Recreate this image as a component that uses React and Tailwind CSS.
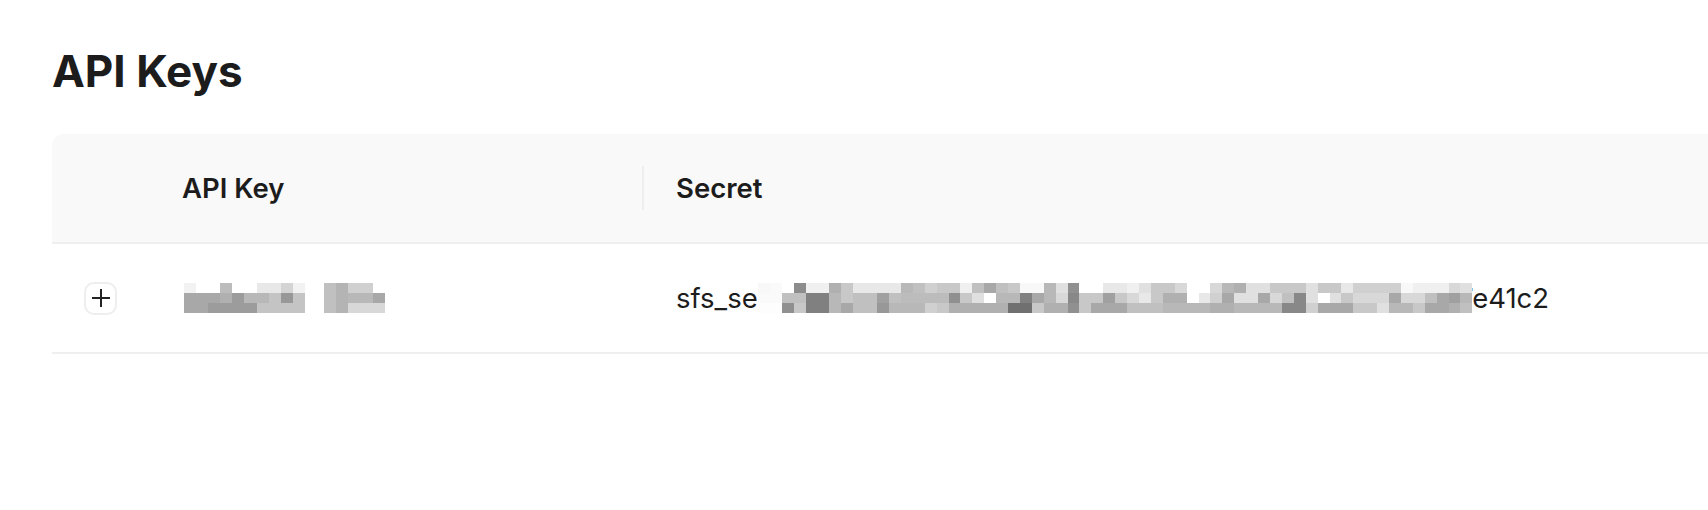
import React from "react";

// pixelated (redacted) blocks: each entry is one 12px column, top/middle/bottom shade
const keyBlur1 = [
  ["#f2f2f2", "#a8a8a8", "#a8a8a8"],
  ["#ffffff", "#a8a8a8", "#a8a8a8"],
  ["#ffffff", "#a8a8a8", "#9c9c9c"],
  ["#bcbcbc", "#b0b0b0", "#9c9c9c"],
  ["#ffffff", "#9c9c9c", "#9c9c9c"],
  ["#ffffff", "#b8b8b8", "#9c9c9c"],
  ["#e8e8e8", "#b8b8b8", "#c4c4c4"],
  ["#e8e8e8", "#c4c4c4", "#c4c4c4"],
  ["#d4d4d4", "#989898", "#c4c4c4"],
  ["#f2f2f2", "#c4c4c4", "#c4c4c4"],
];

const keyBlur2 = [
  ["#c0c0c0", "#c0c0c0", "#c0c0c0"],
  ["#b4b4b4", "#b4b4b4", "#b4b4b4"],
  ["#d0d0d0", "#b8b8b8", "#d8d8d8"],
  ["#d0d0d0", "#b8b8b8", "#d8d8d8"],
  ["#ffffff", "#a8a8a8", "#d8d8d8"],
];

const secretBlur = [
  ["#f8f8f8", "#fafafa", "#fdfdfd"],
  ["#fafafa", "#fafafa", "#fdfdfd"],
  ["#ffffff", "#c0c0c0", "#909090"],
  ["#8c8c8c", "#c0c0c0", "#c8c8c8"],
  ["#f0f0f0", "#808080", "#808080"],
  ["#f0f0f0", "#808080", "#808080"],
  ["#b0b0b0", "#b8b8b8", "#b8b8b8"],
  ["#c8c8c8", "#c8c8c8", "#a8a8a8"],
  ["#e8e8e8", "#c0c0c0", "#c0c0c0"],
  ["#e8e8e8", "#c0c0c0", "#c0c0c0"],
  ["#e8e8e8", "#a0a0a0", "#989898"],
  ["#e8e8e8", "#c0c0c0", "#b8b8b8"],
  ["#b8b8b8", "#bcbcbc", "#b8b8b8"],
  ["#c0c0c0", "#bcbcbc", "#b8b8b8"],
  ["#d0d0d0", "#bcbcbc", "#d0d0d0"],
  ["#c8c8c8", "#bcbcbc", "#c8c8c8"],
  ["#c8c8c8", "#909090", "#b0b0b0"],
  ["#f0f0f0", "#c8c8c8", "#b0b0b0"],
  ["#c0c0c0", "#e0e0e0", "#b0b0b0"],
  ["#a8a8a8", "#ffffff", "#b0b0b0"],
  ["#c0c0c0", "#b8b8b8", "#b0b0b0"],
  ["#c8c8c8", "#b8b8b8", "#707070"],
  ["#f8f8f8", "#808080", "#707070"],
  ["#f8f8f8", "#a8a8a8", "#c8c8c8"],
  ["#b8b8b8", "#b8b8b8", "#b0b0b0"],
  ["#e0e0e0", "#d8d8d8", "#b0b0b0"],
  ["#909090", "#888888", "#909090"],
  ["#ffffff", "#c8c8c8", "#c8c8c8"],
  ["#ffffff", "#c8c8c8", "#a8a8a8"],
  ["#e8e8e8", "#a0a0a0", "#a8a8a8"],
  ["#e8e8e8", "#c8c8c8", "#a8a8a8"],
  ["#f0f0f0", "#d8d8d8", "#c0c0c0"],
  ["#e0e0e0", "#e8e8e8", "#c0c0c0"],
  ["#c8c8c8", "#c8c8c8", "#c0c0c0"],
  ["#c8c8c8", "#b0b0b0", "#b8b8b8"],
  ["#d8d8d8", "#b0b0b0", "#b8b8b8"],
  ["#ffffff", "#ffffff", "#b8b8b8"],
  ["#ffffff", "#e8e8e8", "#b8b8b8"],
  ["#d8d8d8", "#d0d0d0", "#b0b0b0"],
  ["#b8b8b8", "#a8a8a8", "#b0b0b0"],
  ["#b0b0b0", "#e0e0e0", "#b8b8b8"],
  ["#e0e0e0", "#e0e0e0", "#b8b8b8"],
  ["#e0e0e0", "#a8a8a8", "#b8b8b8"],
  ["#c8c8c8", "#d8d8d8", "#b8b8b8"],
  ["#c8c8c8", "#c0c0c0", "#888888"],
  ["#c8c8c8", "#888888", "#888888"],
  ["#e0e0e0", "#e0e0e0", "#d0d0d0"],
  ["#c8c8c8", "#ffffff", "#a8a8a8"],
  ["#c8c8c8", "#e0e0e0", "#a8a8a8"],
  ["#e8e8e8", "#c8c8c8", "#a8a8a8"],
  ["#d0d0d0", "#d8d8d8", "#c8c8c8"],
  ["#d0d0d0", "#d8d8d8", "#c8c8c8"],
  ["#d0d0d0", "#d8d8d8", "#e0e0e0"],
  ["#d0d0d0", "#a8a8a8", "#b8b8b8"],
  ["#f8f8f8", "#d8d8d8", "#b8b8b8"],
  ["#f0f0f0", "#d8d8d8", "#c8c8c8"],
  ["#f0f0f0", "#c0c0c0", "#a8a8a8"],
  ["#f0f0f0", "#a8a8a8", "#a8a8a8"],
  ["#d8d8d8", "#a0a0a0", "#b0b0b0"],
  ["#e0e0e0", "#b8b8b8", "#c0c0c0"],
];

function Pixelated({ cols, className }) {
  return (
    <div className={"relative z-10 flex " + className}>
      {cols.map((col, i) => (
        <div key={i} className="flex flex-1 flex-col">
          {col.map((c, j) => (
            <div key={j} className="flex-1" style={{ backgroundColor: c }} />
          ))}
        </div>
      ))}
    </div>
  );
}

function PlusButton() {
  return (
    <button className="flex h-[33px] w-[33px] items-center justify-center rounded-[10px] border-2 border-[#eeeeee] bg-white">
      <svg width="20" height="20" viewBox="0 0 20 20" fill="none">
        <path d="M10 1v18M1 10h18" stroke="#222222" strokeWidth="2" />
      </svg>
    </button>
  );
}

export default function App() {
  return (
    <div className="h-[510px] w-full overflow-hidden bg-white font-['Inter','Liberation_Sans',sans-serif] text-[#1c1c1c]">
      <h1 className="pl-[52px] pt-[45px] text-[44px] leading-[52px] font-bold">
        API Keys
      </h1>

      <div className="ml-[52px] mt-[37px] w-[1700px]">
        {/* header */}
        <div className="grid h-[110px] grid-cols-[97px_493px_1fr] rounded-t-[12px] border-b-2 border-[#efefef] bg-[#f9f9f9] text-[27.5px] leading-[36px] font-semibold">
          <div />
          <div className="flex items-center pl-[33px]">API Key</div>
          <div className="flex items-center">
            <div className="flex h-[44px] items-center border-l-2 border-[#eeeeee] pl-[32px]">
              Secret
            </div>
          </div>
        </div>

        {/* row */}
        <div className="grid h-[110px] grid-cols-[97px_493px_1fr] border-b-2 border-[#efefef] text-[27.5px] leading-[36px]">
          <div className="flex items-center justify-center">
            <PlusButton />
          </div>
          <div className="flex items-center pl-[35px]">
            <Pixelated cols={keyBlur1} className="h-[31px] w-[121px]" />
            <Pixelated cols={keyBlur2} className="ml-[19px] h-[31px] w-[61px]" />
          </div>
          <div className="flex items-center pl-[34px]">
            <span className="inline-block w-[82px] whitespace-nowrap">sfs_se</span>
            <Pixelated cols={secretBlur} className="h-[30px] w-[714px]" />
            <span className="-ml-[14px] whitespace-nowrap">7e41c2</span>
          </div>
        </div>
      </div>
    </div>
  );
}
